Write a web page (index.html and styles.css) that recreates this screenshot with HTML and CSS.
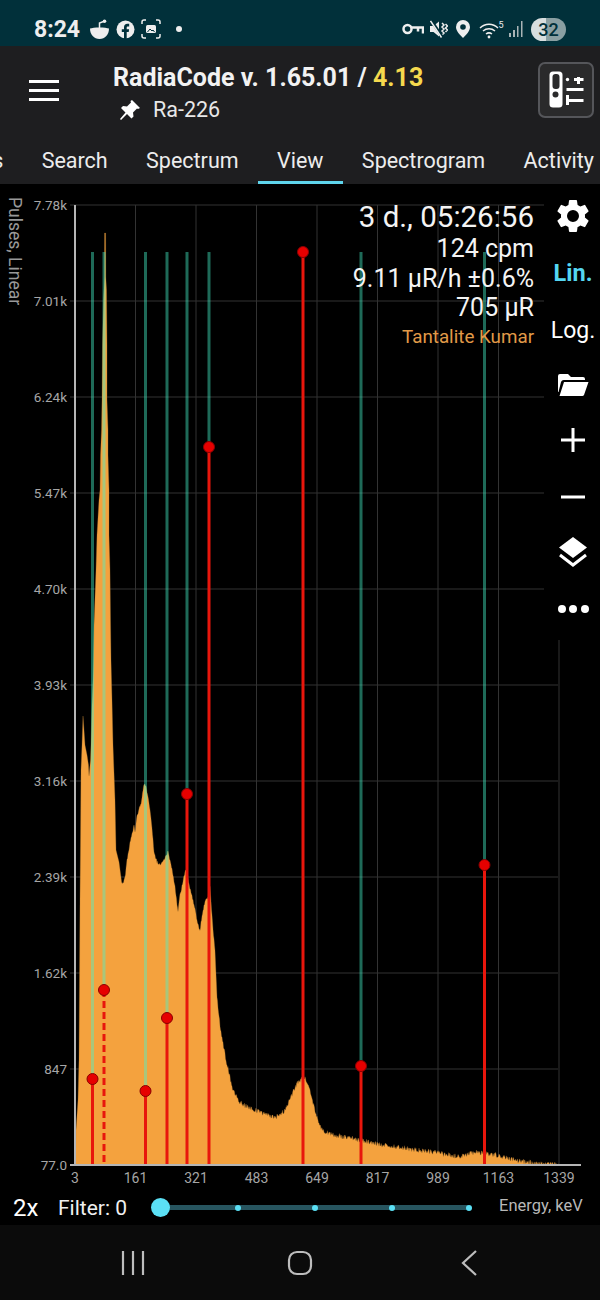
FILE: index.html
```html
<!DOCTYPE html>
<html lang="en">
<head>
<meta charset="UTF-8" />
<meta name="viewport" content="width=device-width, initial-scale=1" />
<title>RadiaCode</title>
<link rel="stylesheet" href="styles.css">
</head>
<body>
<div class="status-bar">
  <span class="clock">8:24</span>
  <svg class="ic-bowl" width="19" height="20" viewBox="0 0 19 20"><path d="M0 9.500c3-1.500 16-1.500 19 0 0 6-4 10.500-9.500 10.500S0 15.500 0 9.500z" fill="#eee"/><path d="M9.500 9V4l4-1.500" stroke="#eee" stroke-width="1.500" fill="none"/><circle cx="14.500" cy="2.200" r="1.800" fill="#eee"/></svg>
  <svg class="ic-fb" width="19" height="19" viewBox="0 0 19 19"><circle cx="9.500" cy="9.500" r="9" fill="#eee"/><path d="M8 19v-7H5.800V9.200H8V7.300C8 5 9.300 3.800 11.400 3.800h1.800v2.600h-1.200c-1 0-1.300.5-1.300 1.200v1.600h2.400L12.700 12h-2v7z" fill="#01303a"/></svg>
  <svg class="ic-shot" width="20" height="20" viewBox="0 0 20 20" fill="none" stroke="#eee" stroke-width="1.500"><path d="M1 5V3a2 2 0 0 1 2-2h2M15 1h2a2 2 0 0 1 2 2v2M1 15v2a2 2 0 0 0 2 2h2M15 19h2a2 2 0 0 0 2-2v-2"/><rect x="5" y="6" width="10" height="8" rx="1.500" fill="#eee" stroke="none"/><path d="M6.500 13l2.500-3 2 2 1-1 1.500 2" stroke="#01303a" stroke-width="1"/></svg>
  <span class="st-dot"></span>
  <span class="spacer"></span>
  <svg class="ic-key" width="22" height="13" viewBox="0 0 22 13" fill="none" stroke="#eee" stroke-width="2.500"><circle cx="5.500" cy="6" r="4"/><path d="M9 4.500h12v6M16 4.500v4"/></svg>
  <svg class="ic-mute" width="18" height="18" viewBox="0 0 18 18"><path d="M0 6h3.500L9 1.500v15L3.500 12H0z" fill="#eee"/><path d="M12 3l2 2-2 2 2 2-2 2 2 2 -2 2M15.500 4l2 2-2 2 2 2-2 2" stroke="#eee" stroke-width="1.500" fill="none"/><path d="M1 0l12 18" stroke="#01303a" stroke-width="3"/><path d="M0.500 1l11 16.500" stroke="#eee" stroke-width="1.500"/></svg>
  <svg class="ic-pin" width="14" height="18" viewBox="0 0 14 18"><path d="M7 0a7 7 0 0 1 7 7c0 4-4 8-7 11-3-3-7-7-7-11a7 7 0 0 1 7-7z" fill="#eee"/><circle cx="7" cy="7" r="2.800" fill="#01303a"/></svg>
  <svg class="ic-wifi" width="26" height="19" viewBox="0 0 26 19" fill="none" stroke="#eee" stroke-width="1.500"><path d="M1 8c5-5 13-5 18 0M4 11c3.500-3 8.500-3 12 0M7 14c2-1.500 4-1.500 6 0"/><circle cx="10" cy="17" r="1.400" fill="#eee" stroke="none"/><text x="19.500" y="8" class="wifi-num">5</text></svg>
  <svg class="ic-bars" width="16" height="18" viewBox="0 0 16 18"><path d="M1 13h2v4H1zM5 10h2v7H5zM9 6h1.500v11H9zM13 1h1.500v16H13z" fill="#aab4b6"/></svg>
  <span class="battery">32</span>
</div>

<header class="app-bar">
  <svg class="menu" width="30" height="21" viewBox="0 0 30 21"><path d="M0 1.500h30M0 10.500h30M0 19.500h30" stroke="#fff" stroke-width="3"/></svg>
  <div class="titles">
    <div class="title">RadiaCode v. 1.65.01 / <span class="fw">4.13</span></div>
    <div class="subtitle">
      <svg width="22" height="22" viewBox="0 0 22 22"><path d="M13 1l8 8-2 1-1-.5-4 4 .5 4-2 2-4.500-4.500L2 21l-1-1 5.500-6.500L2 9l2-2 4 .5 4-4L11.500 2z" fill="#fff"/></svg>
      <span>Ra-226</span>
    </div>
  </div>
  <div class="device-btn">
    <svg width="40" height="40" viewBox="0 0 40 40">
      <rect x="3.500" y="1.500" width="13" height="36" rx="3.500" fill="#fff"/>
      <rect x="6.500" y="4" width="7" height="15" rx="3" fill="#2a2a2b"/>
      <circle cx="9.500" cy="24.500" r="3" fill="#2a2a2b"/>
      <circle cx="21.500" cy="9.500" r="1.700" fill="#fff"/>
      <path d="M28 9.500h9.500M32.500 7v7M20.500 19.500h17M22 30.500h15.500M21.500 25v10" stroke="#fff" stroke-width="3"/>
    </svg>
  </div>
</header>

<nav class="tabs">
  <span class="tab">s</span>
  <span class="tab">Search</span>
  <span class="tab">Spectrum</span>
  <span class="tab active">View</span>
  <span class="tab">Spectrogram</span>
  <span class="tab">Activity</span>
</nav>

<main class="chart">
  <svg id="plot" width="600" height="1006" viewBox="0 184 600 1006"></svg>

  <div class="stats">
    <div class="timer">3 d., 05:26:56</div>
    <div>124 cpm</div>
    <div>9.11 µR/h ±0.6%</div>
    <div>705 µR</div>
    <div class="spec-name">Tantalite Kumar</div>
  </div>

  <aside class="side">
    <svg class="gear" width="40" height="40" viewBox="0 0 24 24"><path fill="#fff" d="M19.140 12.940c.04-.3.060-.61.060-.94s-.02-.64-.07-.94l2.030-1.580a.49.49 0 0 0 .12-.61l-1.920-3.320a.49.49 0 0 0-.59-.22l-2.390.96a7 7 0 0 0-1.620-.94l-.36-2.540a.48.480 0 0 0-.48-.41h-3.840a.48.480 0 0 0-.47.41l-.36 2.540a7.200 7.200 0 0 0-1.620.94l-2.390-.96a.48.480 0 0 0-.59.220L2.740 8.870a.48.480 0 0 0 .12.610l2.030 1.580c-.05.3-.09.63-.09.94s.02.64.07.94l-2.030 1.580a.49.49 0 0 0-.12.610l1.920 3.320c.12.22.37.29.59.22l2.390-.96c.5.38 1.030.7 1.620.94l.36 2.540c.05.24.24.41.48.41h3.840c.24 0 .44-.17.47-.41l.36-2.540a6.900 6.900 0 0 0 1.620-.94l2.390.96c.22.08.47 0 .59-.22l1.920-3.320a.48.480 0 0 0-.12-.61zM12 15.600a3.600 3.600 0 1 1 0-7.200 3.600 3.600 0 0 1 0 7.200z"/></svg>
    <div class="mode lin">Lin.</div>
    <div class="mode log">Log.</div>
    <svg class="folder" width="32" height="24" viewBox="0 0 32 24"><path fill="#fff" d="M1 3a2 2 0 0 1 2-2h8l3 3h12a2 2 0 0 1 2 2v1H7a3 3 0 0 0-3 2L1.500 19 1 19z"/><path fill="#fff" d="M7 9h24.500L27 22a2 2 0 0 1-2 1H2.500z"/></svg>
    <svg class="plus" width="26" height="26" viewBox="0 0 26 26"><path d="M1 13h24M13 1v24" stroke="#fff" stroke-width="3"/></svg>
    <svg class="minus" width="26" height="4" viewBox="0 0 26 4"><path d="M1 2h24" stroke="#fff" stroke-width="3"/></svg>
    <svg class="layers" width="30" height="32" viewBox="0 0 30 32"><path fill="#fff" d="M15 1l14 10.500L15 22 1 11.500z"/><path fill="none" stroke="#fff" stroke-width="3" d="M2 19l13 10 13-10"/></svg>
    <div class="dots"><i></i><i></i><i></i></div>
  </aside>
</main>

<section class="bottom-row">
  <span class="zoom-x">2x</span>
  <span class="filter">Filter: 0</span>
  <div class="slider">
    <span class="thumb"></span>
    <span class="stop"></span>
    <span class="stop"></span>
    <span class="stop"></span>
    <span class="stop"></span>
  </div>
  <span class="energy">Energy, keV</span>
</section>

<footer class="nav-bar">
  <svg width="24" height="24" viewBox="0 0 24 24"><path d="M2 0v24M12 0v24M22 0v24" stroke="#bdbdbd" stroke-width="2.200"/></svg>
  <svg width="26" height="26" viewBox="0 0 26 26"><rect x="2" y="2" width="22" height="22" rx="8" fill="none" stroke="#bdbdbd" stroke-width="2.200"/></svg>
  <svg class="back" width="16" height="26" viewBox="0 0 16 26"><path d="M15 1L2 13l13 12" fill="none" stroke="#bdbdbd" stroke-width="2.200"/></svg>
</footer>

<script src="script.js"></script>
</body>
</html>
```

FILE: styles.css
```css
* { box-sizing: border-box; }
body { margin: 0; width: 600px; height: 1300px; overflow: hidden; background: #000; color: #fff; font-family: Roboto, sans-serif; }

.status-bar { height: 46px; background: #01303a; display: flex; align-items: center; padding: 12px 34px 0 34px; }
.clock { font-size: 23px; font-weight: 700; color: #eee; width: 56px; }
.ic-fb { margin-left: 7px; }
.ic-shot { margin-left: 6px; }
.st-dot { width: 6px; height: 6px; border-radius: 50%; background: #eee; margin-left: 15px; }
.spacer { flex: 1; }
.ic-mute { margin-left: 6px; }
.ic-pin { margin-left: 8px; }
.ic-wifi { margin-left: 9px; }
.ic-bars { margin-left: 3px; }
.wifi-num { font-size: 9px; fill: #eee; stroke: none; font-family: Roboto, sans-serif; }
.battery { width: 35px; height: 23px; border-radius: 12px; background: linear-gradient(90deg, #d8dedf 0 42%, #8a9fa2 42%); color: #01303a; font-size: 18px; font-weight: 500; text-align: center; line-height: 23px; margin-left: 7px; }

.app-bar { height: 91px; background: #1e1e20; display: flex; align-items: center; padding: 0 6px 0 29px; }
.menu { margin-right: 54px; margin-top: -3px; }
.titles { flex: 1; margin-top: 3px; }
.title { font-size: 25px; font-weight: 700; line-height: 28px; color: #f2f2f2; white-space: nowrap; }
.fw { color: #f5d94e; }
.subtitle { display: flex; align-items: center; gap: 12px; margin: 5px 0 0 6px; font-size: 21.500px; color: #e8e8e8; }
.device-btn { width: 56px; height: 56px; border: 2px solid #55565a; border-radius: 7px; background: #2a2a2b; display: flex; align-items: center; justify-content: center; margin-top: -4px; }

.tabs { height: 47px; background: #1e1e20; display: flex; overflow: hidden; }
.tab { flex: none; padding: 0 19.200px; height: 47px; line-height: 47px; font-size: 21.500px; color: #ececec; }
.tab:first-child { margin-left: -27px; }
.tab.active { border-bottom: 3px solid #5fd5ec; }

.chart { position: relative; height: 1006px; }
#plot { display: block; }
.grid { stroke: #333; stroke-width: 1; }
.axis { stroke: #b5b5b5; stroke-width: 2; }
.y-label, .x-label { font-size: 13.500px; fill: #a6a6a6; font-family: Roboto, sans-serif; }
.y-label { text-anchor: end; }
.x-label { text-anchor: middle; font-size: 14px; }
.y-title { font-size: 17.500px; fill: #999; font-family: Roboto, sans-serif; }
.spectrum { fill: #f4a23e; stroke: #a87430; stroke-width: .3; }
.green-line { stroke: rgba(70, 246, 205, .43); stroke-width: 3; }
.red-line { stroke: #e8160c; stroke-width: 3; }
.red-line.dashed { stroke-dasharray: 7 4; }
.marker { fill: #e60000; stroke: #8a0000; stroke-width: 1; }

.stats { position: absolute; top: 16px; right: 66px; text-align: right; font-size: 25px; line-height: 29.500px; color: #f4f4f4; white-space: nowrap; }
.timer { font-size: 29.500px; line-height: 34px; }
.spec-name { font-size: 18.800px; color: #e09a48; }

.side { position: absolute; top: 0; right: 0; width: 56px; height: 456px; background: #000; display: flex; flex-direction: column; align-items: center; padding-left: 2px; }
.gear { margin-top: 12px; }
.mode { font-size: 23px; text-align: center; }
.lin { font-weight: 700; font-size: 23.500px; color: #55d6f2; margin-top: 23px; }
.log { margin-top: 30px; }
.folder { margin-top: 29px; }
.plus { margin-top: 30px; }
.minus { margin-top: 42px; }
.layers { margin-top: 37px; }
.dots { display: flex; gap: 3.500px; margin-top: 37px; }
.dots i { width: 8px; height: 8px; border-radius: 50%; background: #fff; }

.bottom-row { height: 35px; display: flex; align-items: center; padding-left: 13px; background: #000; }
.zoom-x { font-size: 24px; width: 45px; }
.filter { font-size: 21px; width: 102px; color: #f0f0f0; }
.slider { position: relative; width: 309px; height: 5px; background: #27555f; border-radius: 3px; display: flex; justify-content: flex-end; align-items: center; gap: 71px; }
.thumb { position: absolute; left: -9px; top: -7px; width: 19px; height: 19px; border-radius: 50%; background: #5be0f5; }
.stop { width: 6px; height: 6px; border-radius: 50%; background: #5be0f5; }
.stop:last-child { margin-right: -3px; }
.energy { font-size: 16.500px; color: #b8b8b8; margin-left: 30px; margin-top: -5px; white-space: nowrap; }

.nav-bar { height: 75px; background: #0b0b0b; display: flex; align-items: center; gap: 142px; padding-left: 121px; }
.back { margin-left: 6px; }
```

FILE: script.js
```js
const plot = document.getElementById('plot');
const NS = 'http://www.w3.org/2000/svg';

function add(tag, attrs, text) {
  const el = document.createElementNS(NS, tag);
  for (const k in attrs) el.setAttribute(k, attrs[k]);
  if (text) el.textContent = text;
  plot.appendChild(el);
  return el;
}

const BASE = 1165;
const yLabels = ['7.78k', '7.01k', '6.24k', '5.47k', '4.70k', '3.93k', '3.16k', '2.39k', '1.62k', '847', '77.0'];
const xLabels = ['3', '161', '321', '483', '649', '817', '989', '1163', '1339'];

// grid
yLabels.forEach((label, i) => {
  const y = 205 + i * 96;
  if (i < 10) add('line', { x1: 70, x2: 558, y1: y, y2: y, class: 'grid' });
  add('text', { x: 67, y: y + 5, class: 'y-label' }, label);
});
xLabels.forEach((label, i) => {
  const x = 75 + i * 60.5;
  if (i > 0) add('line', { x1: x, x2: x, y1: 205, y2: BASE, class: 'grid' });
  add('text', { x: x, y: 1183, class: 'x-label' }, label);
});
add('text', { x: 0, y: 0, transform: 'translate(9 197) rotate(90)', class: 'y-title' }, 'Pulses, Linear');

const outline = [
  [75,1165],[76,1130],[78,1100],[79,1060],[80,900],[80.500,840],[81,770],[82,745],[83,716],[84,730],[85,745],
  [87,755],[88.500,765],[89,776],[90.500,760],[91,745],[92,705],[93,680],[94,625],[96,570],[97,535],[99,500],
  [100,490],[100.500,455],[101.500,430],[102,400],[102.500,345],[103.500,300],[104.400,277],[104.600,233],[105.600,233],
  [105.800,277],[106.500,290],[107,345],[107,400],[108,430],[108,455],[109,490],[109,535],[110,570],[110.500,620],[111,660],[112,700],
  [113,745],[115,800],[116,850],[119,862],[122,885],[125,878],[127,860],[130,843],[134,826],[135,832],[137,816],
  [141,803],[144,783],[146,786],[148,797],[151,817],[154,852],[157,862],[160,865],[165,858],[168,852],[170,860],
  [172,870],[175,887],[178,912],[180,895],[185,872],[187,870],[189,885],[193,900],[197,920],[200,931],[202,915],
  [205,902],[208,896],[210,887],[213,930],[215,950],[217,997],[221,1033],[226,1060],[232,1087],[238,1100],[245,1106],
  [260,1112],[275,1118],[285,1110],[292,1094],[298,1082],[304,1077],[310,1090],[316,1115],[322,1130],[330,1134],
  [360,1140],[383,1145],[438,1153],[459,1157],[475,1152],[497,1155],[520,1161],[536,1163],[559,1165]
];

// small seeded generator so the noisy tail is the same on every load
let seed = 1234;
function rnd() {
  seed = (seed * 16807) % 2147483647;
  return seed / 2147483647 - 0.5;
}

const pts = [];
for (let i = 0; i < outline.length - 1; i++) {
  const [x0, y0] = outline[i];
  const [x1, y1] = outline[i + 1];
  const steps = Math.max(1, Math.round((x1 - x0) * 2));
  for (let s = 0; s < steps; s++) {
    const t = s / steps;
    const noise = x0 > 215 && x0 < 540 ? rnd() * 5 : x0 > 120 ? rnd() * 3 : 0;
    pts.push((x0 + (x1 - x0) * t).toFixed(1) + ',' + Math.min(BASE, y0 + (y1 - y0) * t + noise).toFixed(1));
  }
}
pts.push('559,' + BASE);
add('polygon', { points: pts.join(' '), class: 'spectrum' });

// isotope lines: x, marker y, dashed
const peaks = [
  [92.500, 1079], [104, 990, true], [145.500, 1091], [167, 1018], [187, 794],
  [209, 447], [303, 252], [361, 1066], [484.500, 865]
];
peaks.forEach(([x, y, dashed]) => {
  if (y > 252) add('line', { x1: x, x2: x, y1: 252, y2: y, class: 'green-line' });
  add('line', { x1: x, x2: x, y1: y, y2: BASE, class: dashed ? 'red-line dashed' : 'red-line' });
});
add('line', { x1: 75, x2: 75, y1: 205, y2: BASE, class: 'axis' });
add('line', { x1: 70, x2: 581, y1: BASE, y2: BASE, class: 'axis' });
peaks.forEach(([x, y]) => add('circle', { cx: x, cy: y, r: 5.500, class: 'marker' }));
```
